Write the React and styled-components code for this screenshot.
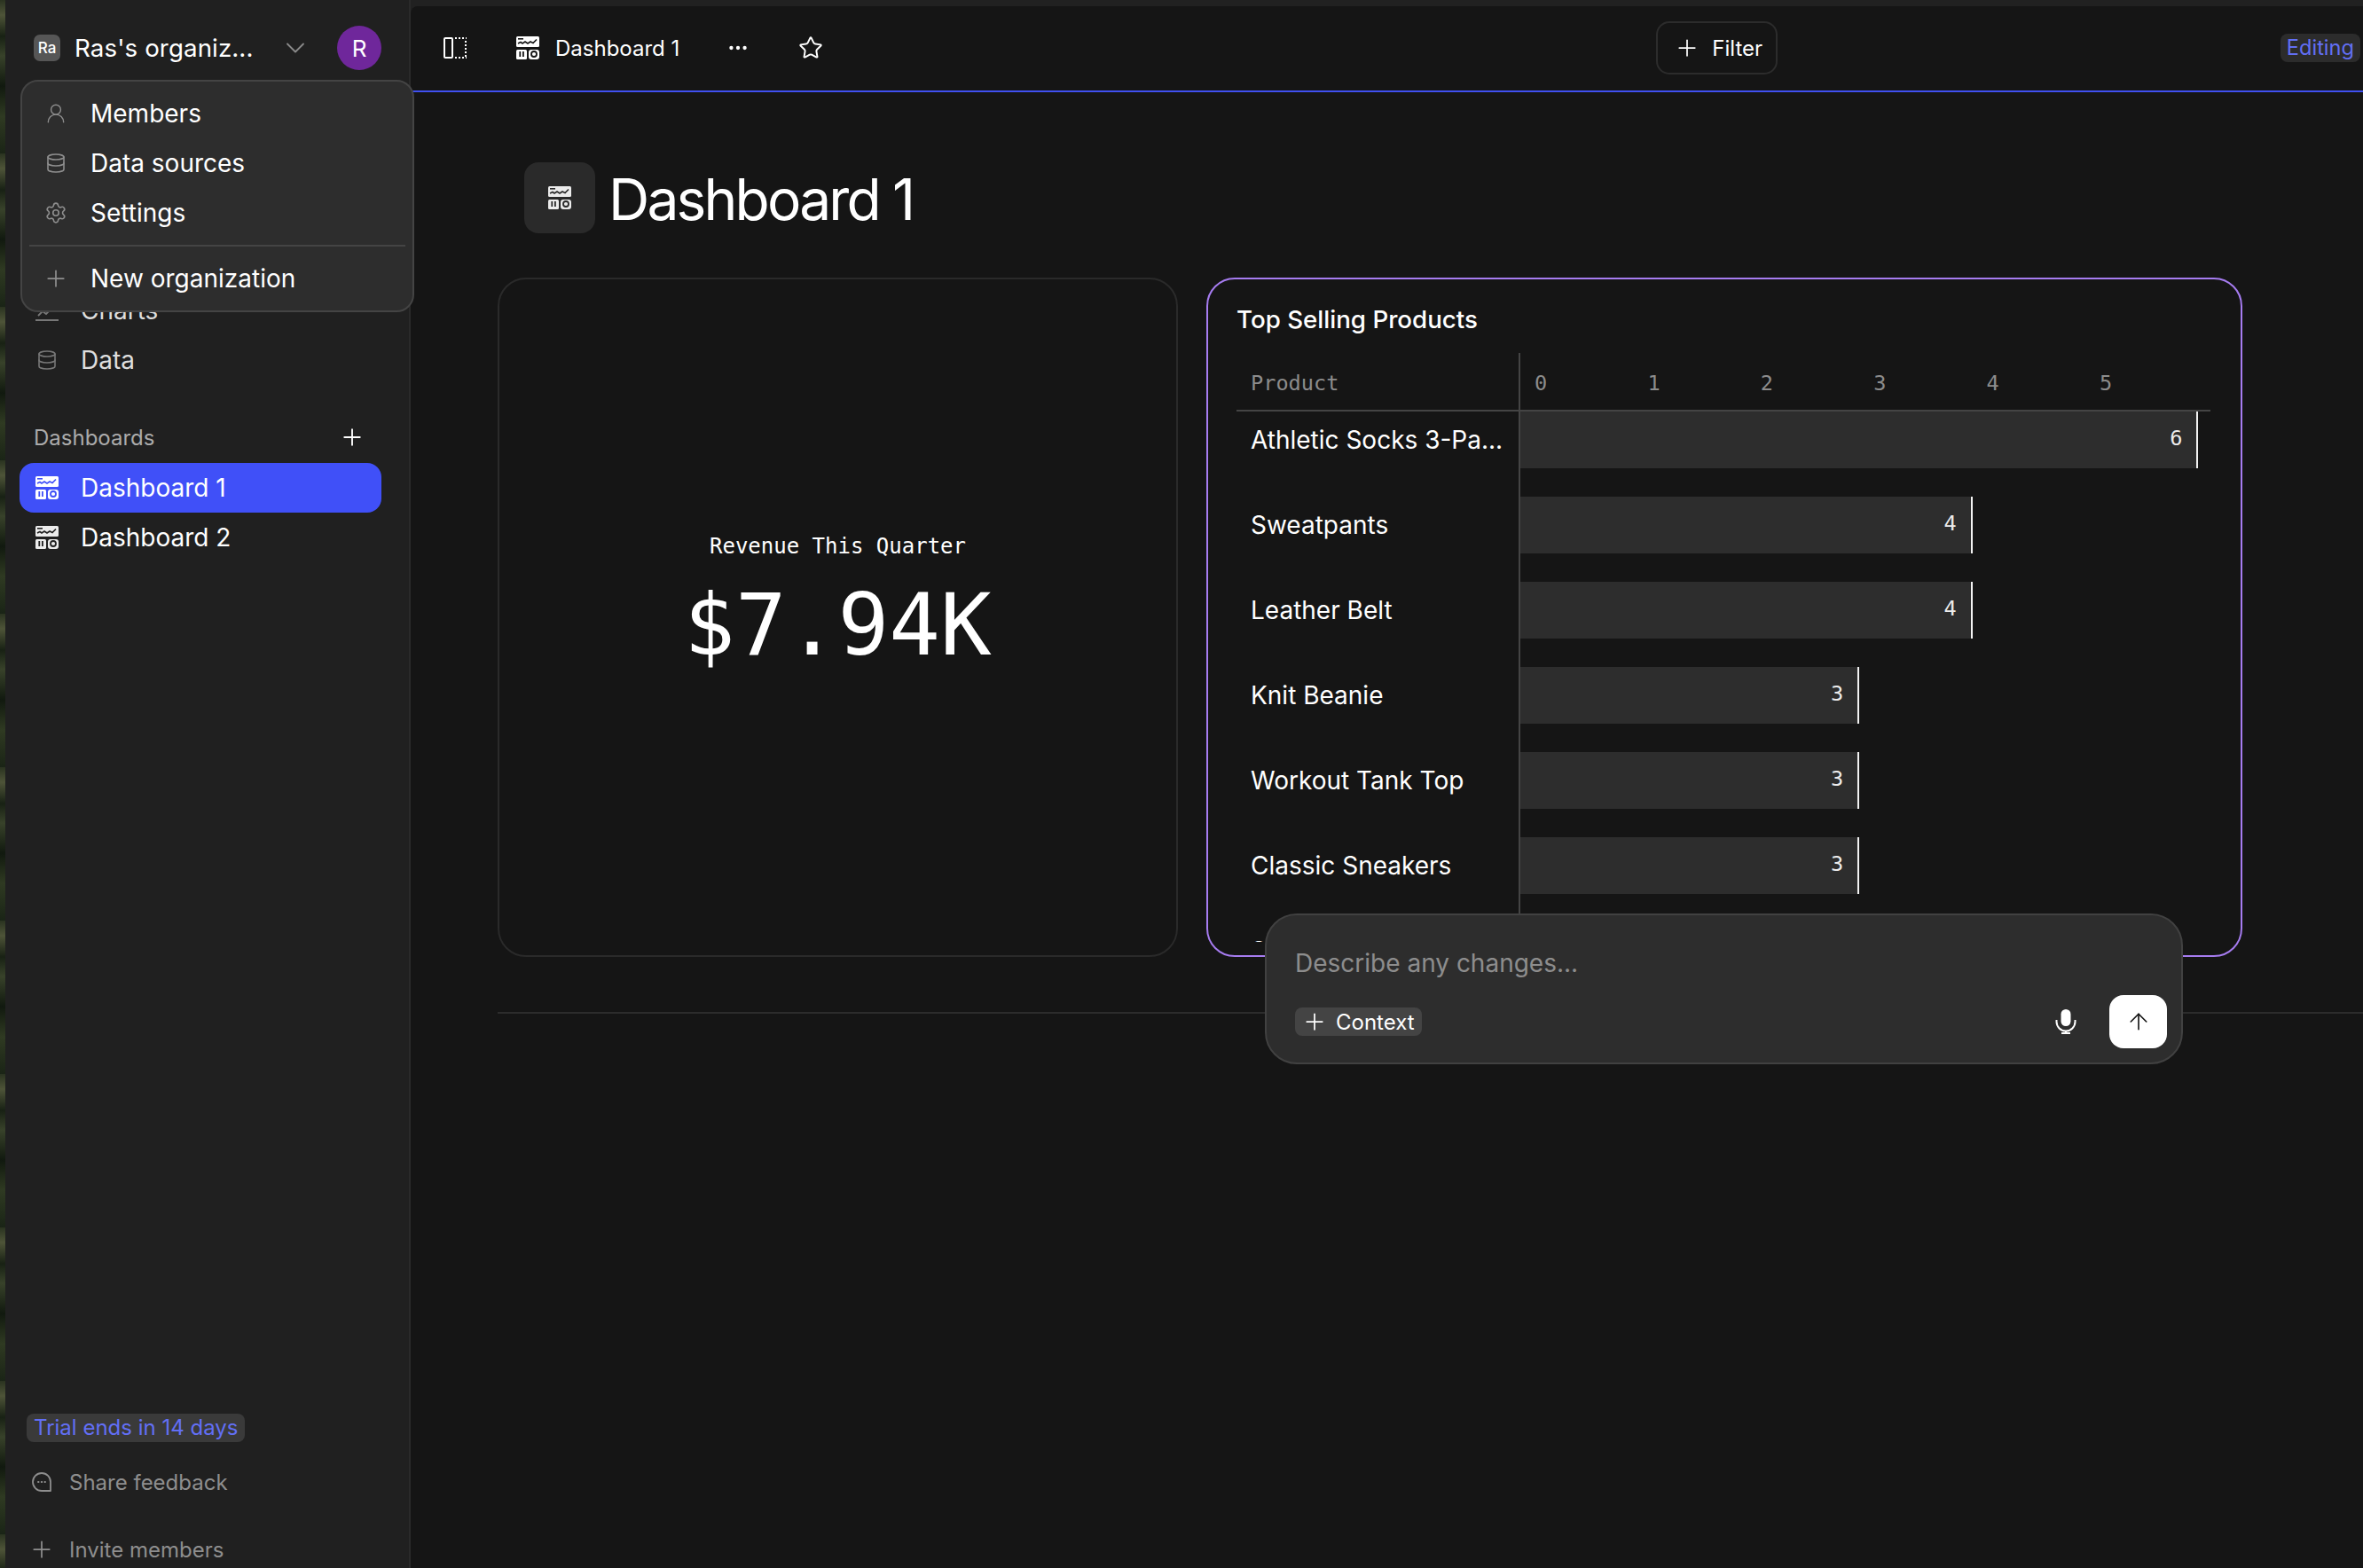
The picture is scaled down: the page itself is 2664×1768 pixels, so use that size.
import { useId } from 'react';
import styled, { createGlobalStyle } from 'styled-components';
import { ArrowUp, ChevronDown, Database, Ellipsis, Plus, Settings, Star, UserRound } from 'lucide-react';

const GlobalStyle = createGlobalStyle`
  html, body {
    margin: 0;
    padding: 0;
    height: 100%;
    overflow: hidden;
    background: #151515;
  }
  * {
    box-sizing: border-box;
  }
`;

const SANS = `Inter, "Noto Sans", "Liberation Sans", sans-serif`;
const MONO = `"DejaVu Sans Mono", "Liberation Mono", monospace`;

const Shell = styled.div`
  position: relative;
  display: grid;
  grid-template-columns: 6px 457px 1fr;
  width: 2664px;
  height: 1768px;
  overflow: hidden;
  font-family: ${SANS};
  color: #fff;
  background: #212121;
`;

const Wallpaper = styled.div`
  background: repeating-linear-gradient(
    180deg,
    #2a3320 0,
    #4e5438 17px,
    #182114 41px,
    #38422a 63px,
    #11190f 97px,
    #2f3a22 131px,
    #1a2416 173px
  );
`;

const Sidebar = styled.aside`
  display: flex;
  flex-direction: column;
  height: 1768px;
  padding: 29px 0 0;
  background: #202020;
  border-right: 2px solid #2a2a2a;
`;

const OrgRow = styled.div`
  display: flex;
  align-items: center;
  height: 50px;
  padding-left: 32px;
`;

const OrgBadge = styled.div`
  display: flex;
  align-items: center;
  justify-content: center;
  width: 30px;
  height: 30px;
  border-radius: 7px;
  background: #565656;
  font-size: 17px;
  font-weight: 500;
`;

const OrgName = styled.span`
  margin-left: 16px;
  width: 231px;
  font-size: 27.7px;
  letter-spacing: 0.1px;
`;

const Avatar = styled.div`
  display: flex;
  align-items: center;
  justify-content: center;
  width: 50px;
  height: 50px;
  margin-left: 29px;
  border-radius: 50%;
  background: #6f279b;
  font-size: 26px;
`;

const NavList = styled.nav`
  display: flex;
  flex-direction: column;
  margin-top: ${props => props.$top || 0}px;
  padding: 0 31px 0 16px;
`;

const NavItem = styled.div`
  display: flex;
  align-items: center;
  gap: 25px;
  height: 56px;
  padding-left: 18px;
  border-radius: 16px;
  font-size: 28px;
  color: ${props => (props.$dim ? '#dedede' : '#fff')};
  background: ${props => (props.$active ? '#4050f8' : 'transparent')};
`;

const IconSlot = styled.span`
  display: flex;
  align-items: center;
  justify-content: center;
  width: 26px;
  color: ${props => props.$color || 'inherit'};
`;

// lucide's plus only fills 14 of its 24 units, so it is drawn larger and pulled in
const BigPlus = styled(Plus).attrs({ size: 30 })`
  flex: none;
  margin: -4px;
`;

const SectionHead = styled.div`
  display: flex;
  align-items: center;
  justify-content: space-between;
  height: 32px;
  margin: 43px 53px 13px 32px;
  font-size: 24px;
  color: #ababab;
`;

const SidebarFooter = styled.div`
  display: flex;
  flex-direction: column;
  margin-top: auto;
  padding: 0 0 5px 24px;
`;

const TrialChip = styled.span`
  align-self: flex-start;
  padding: 0 8px;
  height: 32px;
  line-height: 31px;
  border-radius: 8px;
  background: #3a3a3a;
  color: #626ff5;
  font-size: 24px;
`;

const FooterLink = styled.div`
  display: flex;
  align-items: center;
  gap: 20px;
  height: 32px;
  margin-top: ${props => props.$gap}px;
  padding-left: 6px;
  font-size: 24px;
  color: #8e8e8e;
`;

const Main = styled.main`
  display: flex;
  flex-direction: column;
  margin-top: 7px;
  height: 1761px;
  background: #151515;
  border-top-left-radius: 8px;
`;

const TopBar = styled.header`
  display: flex;
  align-items: center;
  height: 97px;
  padding: 0 3px 1px 37px;
  border-bottom: 2px solid #4050f0;
`;

const TopSpacer = styled.span`
  flex: none;
  width: ${props => props.$width}px;
`;

const TopTitle = styled.span`
  margin-left: 18px;
  font-size: 24px;
`;

const FilterButton = styled.button`
  display: flex;
  align-items: center;
  gap: 17px;
  height: 60px;
  margin-left: 939px;
  padding: 0 15px 0 22px;
  border: 2px solid #2c2c2c;
  border-radius: 15px;
  background: transparent;
  color: #fff;
  font-family: ${SANS};
  font-size: 24px;
`;

const EditingChip = styled.span`
  margin-left: auto;
  padding: 0 7px;
  height: 32px;
  line-height: 31px;
  border-radius: 8px;
  background: #2c2c2c;
  color: #626ff5;
  font-size: 23.6px;
`;

const PageHead = styled.div`
  display: flex;
  align-items: center;
  gap: 15px;
  margin: 79px 0 50px 128px;
`;

const TitleIcon = styled.div`
  display: flex;
  align-items: center;
  justify-content: center;
  width: 80px;
  height: 80px;
  border-radius: 16px;
  background: #2a2a2a;
  color: #ececec;
`;

const PageTitle = styled.h1`
  margin: 3px 0 0;
  font-size: 64px;
  font-weight: 400;
  letter-spacing: -2.8px;
`;

const Cards = styled.div`
  display: flex;
  gap: 32px;
  margin-left: 98px;
  height: 766px;
`;

const KpiCard = styled.section`
  display: flex;
  flex-direction: column;
  align-items: center;
  width: 767px;
  padding-top: 284px;
  border: 2px solid #2a2a2a;
  border-radius: 32px;
  font-family: ${MONO};
`;

const KpiLabel = styled.div`
  font-size: 24px;
  line-height: 34px;
`;

const KpiValue = styled.div`
  margin-top: 16px;
  font-size: 96px;
  line-height: 112px;
`;

const ChartCard = styled.section`
  width: 1168px;
  padding: 28px 34px 0 32px;
  border: 2px solid #a67cf0;
  border-radius: 32px;
`;

const ChartTitle = styled.h2`
  margin: 0 0 21px;
  font-size: 27.7px;
  line-height: 34px;
  font-weight: 450;
`;

const ChartBody = styled.div`
  height: 664px;
  overflow: hidden;
`;

const ChartRow = styled.div`
  display: grid;
  grid-template-columns: 318px 1fr;
  height: ${props => (props.$head ? '66px' : '96px')};
  border-bottom: ${props => (props.$head ? '2px solid #444' : 'none')};
`;

const RowLabel = styled.div`
  padding: 0 16px;
  line-height: ${props => (props.$head ? '38px' : '64px')};
  padding-top: ${props => (props.$head ? '15px' : '0')};
  font-family: ${props => (props.$head ? MONO : SANS)};
  font-size: ${props => (props.$head ? '23.6px' : '28px')};
  color: ${props => (props.$head ? '#8c8c8c' : '#fff')};
  white-space: nowrap;
`;

const Plot = styled.div`
  border-left: 2px solid #444;
`;

const Ticks = styled.div`
  display: flex;
  padding: 15px 0 0 16px;
`;

const Tick = styled.span`
  width: 127.4px;
  font-family: ${MONO};
  font-size: 23.6px;
  line-height: 38px;
  color: #8c8c8c;
`;

const Bar = styled.div`
  height: 64px;
  padding-right: 16px;
  border-right: 2px solid #f2f2f2;
  background: #2d2d2d;
  font-family: ${MONO};
  font-size: 23.6px;
  line-height: 60px;
  text-align: right;
  color: #ececec;
`;

const Rule = styled.hr`
  width: 100%;
  margin: 62px 0 0 98px;
  border: 0;
  border-top: 2px solid #2c2c2c;
`;

const PromptBox = styled.div`
  position: absolute;
  left: 1426px;
  top: 1030px;
  display: flex;
  flex-direction: column;
  width: 1035px;
  height: 170px;
  padding: 34px 16px 0 32px;
  border: 2px solid #414141;
  border-radius: 36px;
  background: #2d2d2d;
`;

const Placeholder = styled.div`
  font-size: 28px;
  line-height: 40px;
  color: #8d8d8d;
`;

const PromptTools = styled.div`
  display: flex;
  align-items: center;
  margin-top: 16px;
`;

const ContextChip = styled.span`
  display: flex;
  align-items: center;
  gap: 13px;
  height: 32px;
  padding: 0 8px 0 11px;
  border-radius: 8px;
  background: #444;
  font-size: 24px;
`;

const MicSlot = styled.span`
  display: flex;
  margin-left: auto;
  margin-right: 37px;
`;

const SendButton = styled.button`
  display: flex;
  align-items: center;
  justify-content: center;
  width: 65px;
  height: 60px;
  border: 0;
  border-radius: 16px;
  background: #fff;
  color: #111;
`;

const OrgMenu = styled.div`
  position: absolute;
  left: 23px;
  top: 90px;
  width: 444px;
  height: 262px;
  padding: 8px 8px;
  border: 2px solid #444;
  border-radius: 20px;
  background: #2d2d2d;
`;

const MenuItem = styled.div`
  display: flex;
  align-items: center;
  gap: 26px;
  height: 56px;
  padding-left: 17px;
  font-size: 28px;
`;

const MenuDivider = styled.div`
  height: 2px;
  margin: 8px 0;
  background: #444;
`;

// dashboard glyph used in the sidebar, top bar and title: chart strip over two tiles
const DashboardIcon = ({ size = 26 }) => {
  const maskId = useId();
  return (
    <svg width={size} height={size} viewBox="0 0 26 26" fill="none">
      <mask id={maskId}>
        <rect x="0" y="0" width="26" height="26" fill="#fff" />
        <rect x="2" y="2" width="6" height="1.6" fill="#000" />
        <path d="M2 8l3-1.5 2 1.5 3-2 3 2 3-2 3 1.5 4-4" stroke="#000" strokeWidth="1.6" />
        <rect x="3.4" y="17" width="1.8" height="6" fill="#000" />
        <rect x="7" y="17" width="1.8" height="6" fill="#000" />
        <circle cx="20" cy="20" r="3" stroke="#000" strokeWidth="1.8" />
      </mask>
      <g mask={`url(#${maskId})`} fill="currentColor">
        <rect x="0" y="0" width="26" height="12" rx="1.5" />
        <rect x="0" y="15" width="12" height="11" rx="1.5" />
        <rect x="14" y="15" width="12" height="11" rx="3" />
      </g>
    </svg>
  );
};

const SidebarToggleIcon = () => (
  <svg width="26" height="24" viewBox="0 0 26 24" fill="none" stroke="#fff" strokeWidth="2">
    <rect x="1" y="1" width="9" height="22" rx="1" />
    <path d="M13 1h13M25 4v18M13 23h13" strokeDasharray="2 2" />
  </svg>
);

const FeedbackIcon = () => (
  <svg width="22" height="22" viewBox="0 0 22 22" fill="none" stroke="#8e8e8e" strokeWidth="1.8">
    <path d="M21 21H11A10 10 0 1 1 21 11Z" strokeLinejoin="round" />
    <path d="M7 11h.6M10.7 11h.6M14.4 11h.6" strokeLinecap="round" />
  </svg>
);

const ChartsIcon = () => (
  <svg width="26" height="26" viewBox="0 0 26 26" fill="none" stroke="currentColor" strokeWidth="1.8">
    <path d="M0 24h26M3 19l5-5 4 3 7-7" />
  </svg>
);

const MicIcon = () => (
  <svg width="24" height="28" viewBox="0 0 24 28" fill="none" stroke="#fff" strokeWidth="2">
    <rect x="6.5" y="0" width="11" height="19" rx="5.5" fill="#fff" stroke="none" />
    <path d="M1.5 12v2a10.500 10.500 0 0 0 21 0v-2M12 24.500V27M7 27h10" />
  </svg>
);

const products = [
  { name: 'Athletic Socks 3-Pa...', units: 6 },
  { name: 'Sweatpants', units: 4 },
  { name: 'Leather Belt', units: 4 },
  { name: 'Knit Beanie', units: 3 },
  { name: 'Workout Tank Top', units: 3 },
  { name: 'Classic Sneakers', units: 3 },
  { name: 'Slim Fit Jeans' }, // scrolled away under the prompt box, only its top shows
];

const UNIT_WIDTH = 127.4;

const App = () => (
  <Shell>
    <GlobalStyle />
    <Wallpaper />

    <Sidebar>
      <OrgRow>
        <OrgBadge>Ra</OrgBadge>
        <OrgName>Ras's organiz...</OrgName>
        <ChevronDown size={36} color="#8a8a8a" strokeWidth={1.2} />
        <Avatar>R</Avatar>
      </OrgRow>

      <NavList $top={243}>
        <NavItem $dim>
          <IconSlot $color="#777">
            <ChartsIcon />
          </IconSlot>
          Charts
        </NavItem>
        <NavItem $dim>
          <IconSlot $color="#777">
            <Database size={24} strokeWidth={1.6} />
          </IconSlot>
          Data
        </NavItem>
      </NavList>

      <SectionHead>
        Dashboards
        <BigPlus color="#fff" strokeWidth={1.5} />
      </SectionHead>

      <NavList>
        <NavItem $active>
          <IconSlot>
            <DashboardIcon />
          </IconSlot>
          Dashboard 1
        </NavItem>
        <NavItem>
          <IconSlot $color="#ececec">
            <DashboardIcon />
          </IconSlot>
          Dashboard 2
        </NavItem>
      </NavList>

      <SidebarFooter>
        <TrialChip>Trial ends in 14 days</TrialChip>
        <FooterLink $gap={29}>
          <FeedbackIcon />
          Share feedback
        </FooterLink>
        <FooterLink $gap={44}>
          <BigPlus color="#8e8e8e" strokeWidth={1.4} />
          Invite members
        </FooterLink>
      </SidebarFooter>
    </Sidebar>

    <Main>
      <TopBar>
        <SidebarToggleIcon />
        <TopSpacer $width={56} />
        <DashboardIcon />
        <TopTitle>Dashboard 1</TopTitle>
        <TopSpacer $width={53} />
        <Ellipsis size={26} color="#fff" strokeWidth={2} />
        <TopSpacer $width={55} />
        <Star size={28} color="#fff" strokeWidth={1.7} />
        <FilterButton>
          <BigPlus color="#fff" strokeWidth={1.4} />
          Filter
        </FilterButton>
        <EditingChip>Editing</EditingChip>
      </TopBar>

      <PageHead>
        <TitleIcon>
          <DashboardIcon />
        </TitleIcon>
        <PageTitle>Dashboard 1</PageTitle>
      </PageHead>

      <Cards>
        <KpiCard>
          <KpiLabel>Revenue This Quarter</KpiLabel>
          <KpiValue>$7.94K</KpiValue>
        </KpiCard>

        <ChartCard>
          <ChartTitle>Top Selling Products</ChartTitle>
          <ChartBody>
            <ChartRow $head>
              <RowLabel $head>Product</RowLabel>
              <Plot>
                <Ticks>
                  {[0, 1, 2, 3, 4, 5].map(tick => (
                    <Tick key={tick}>{tick}</Tick>
                  ))}
                </Ticks>
              </Plot>
            </ChartRow>
            {products.map(product => (
              <ChartRow key={product.name}>
                <RowLabel>{product.name}</RowLabel>
                <Plot>
                  {product.units && <Bar style={{ width: product.units * UNIT_WIDTH }}>{product.units}</Bar>}
                </Plot>
              </ChartRow>
            ))}
          </ChartBody>
        </ChartCard>
      </Cards>

      <Rule />
    </Main>

    <PromptBox>
      <Placeholder>Describe any changes...</Placeholder>
      <PromptTools>
        <ContextChip>
          <BigPlus color="#fff" strokeWidth={1.4} />
          Context
        </ContextChip>
        <MicSlot>
          <MicIcon />
        </MicSlot>
        <SendButton>
          <ArrowUp size={30} strokeWidth={1.3} />
        </SendButton>
      </PromptTools>
    </PromptBox>

    <OrgMenu>
      <MenuItem>
        <IconSlot $color="#8e8e8e">
          <UserRound size={30} strokeWidth={1.3} />
        </IconSlot>
        Members
      </MenuItem>
      <MenuItem>
        <IconSlot $color="#8e8e8e">
          <Database size={24} strokeWidth={1.6} />
        </IconSlot>
        Data sources
      </MenuItem>
      <MenuItem>
        <IconSlot $color="#8e8e8e">
          <Settings size={26} strokeWidth={1.5} />
        </IconSlot>
        Settings
      </MenuItem>
      <MenuDivider />
      <MenuItem>
        <IconSlot $color="#8e8e8e">
          <BigPlus strokeWidth={1.4} />
        </IconSlot>
        New organization
      </MenuItem>
    </OrgMenu>
  </Shell>
);

export default App;
